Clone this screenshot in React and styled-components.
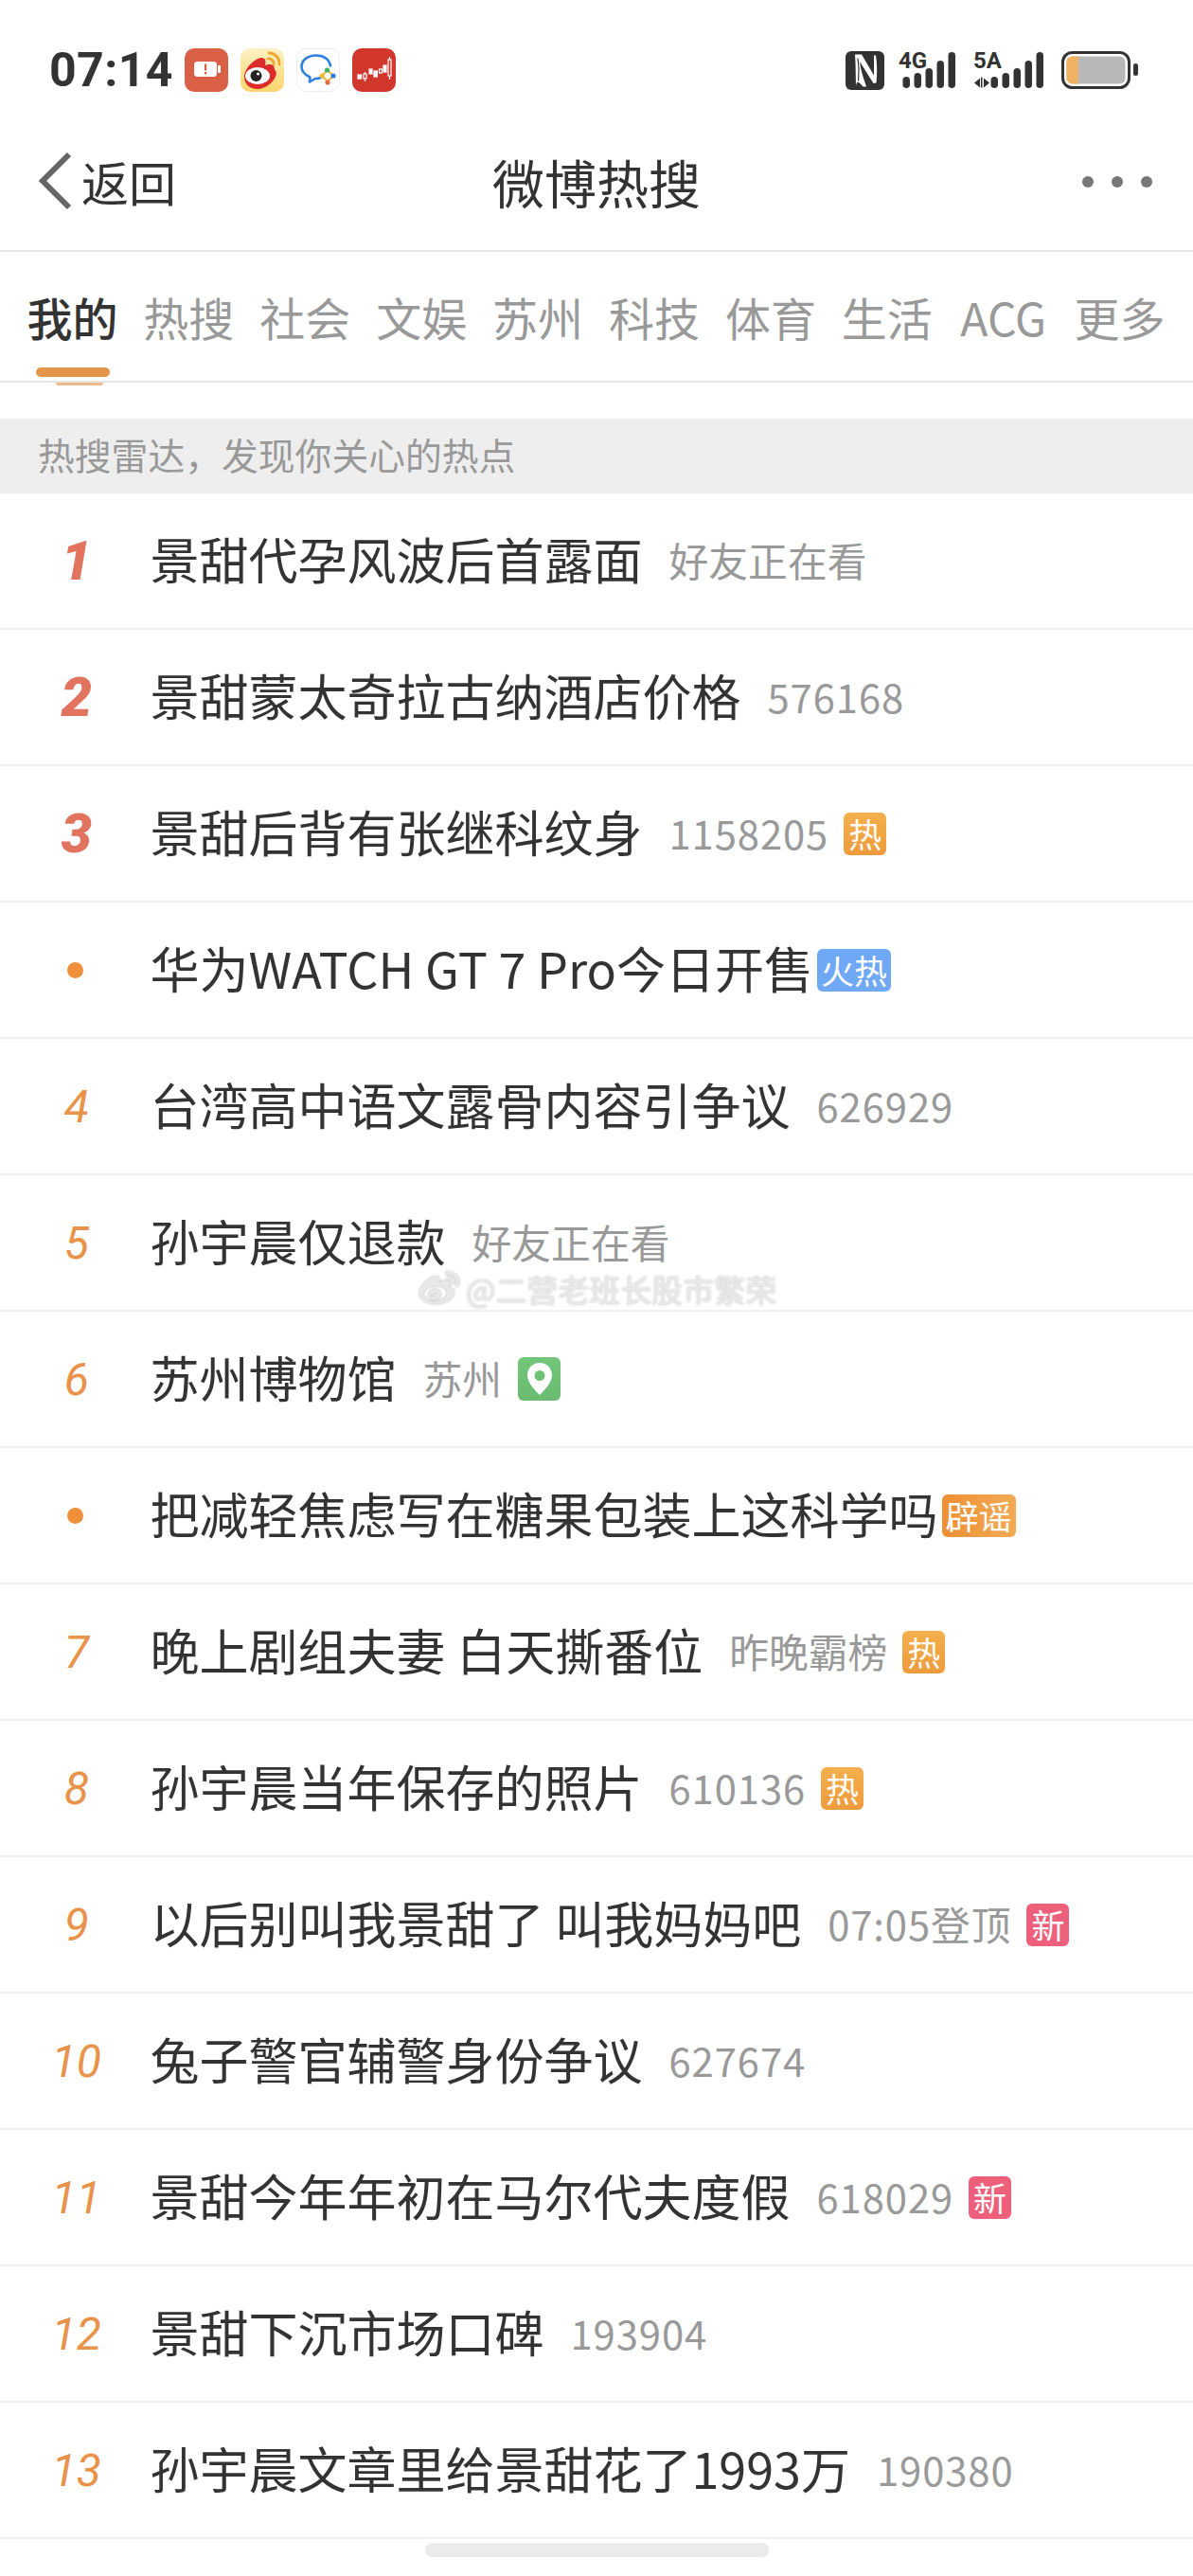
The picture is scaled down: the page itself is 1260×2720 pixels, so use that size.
import React from "react";
import styled, { createGlobalStyle } from "styled-components";
import { FaWeibo } from "react-icons/fa";

const Global = createGlobalStyle`
  html, body { margin: 0; padding: 0; background: #fff; }
  body { font-family: "Noto Sans CJK SC", "Noto Sans", sans-serif; }
`;

const Page = styled.div`
  position: relative;
  width: 1260px;
  height: 2720px;
  overflow: hidden;
  background: #fff;
  color: #333;
`;

const StatusBar = styled.div`
  height: 120px;
  box-sizing: border-box;
  padding: 51px 58px 0 52px;
  display: flex;
  align-items: flex-start;
`;

const Time = styled.div`
  font-family: Roboto, sans-serif;
  font-weight: 700;
  font-size: 50px;
  line-height: 46px;
  width: 143px;
  letter-spacing: 0.4px;
  color: #333;
`;

const AppIcons = styled.div`
  display: flex;
  gap: 13px;
`;

const AppIcon = styled.div`
  width: 46px;
  height: 46px;
  border-radius: 10px;
  background: ${(p) => p.$bg};
  border: ${(p) => (p.$line ? "1px solid #eee" : "none")};
  box-sizing: border-box;
  overflow: hidden;
  display: flex;
  align-items: center;
  justify-content: center;
`;

const StatusRight = styled.div`
  margin-left: auto;
  display: flex;
  align-items: center;
  height: 46px;
  gap: 15px;
`;

const SignalBox = styled.div`
  position: relative;
  width: ${(p) => p.$width}px;
  height: 40px;
`;

const SignalLabel = styled.span`
  position: absolute;
  left: 0;
  top: -3px;
  font-family: Roboto, sans-serif;
  font-weight: 700;
  font-size: 24px;
  line-height: 26px;
  color: #333;
`;

const Nav = styled.div`
  height: 146px;
  box-sizing: border-box;
  border-bottom: 2px solid #e6e6e6;
  padding: 0 43px 3px 40px;
  display: grid;
  grid-template-columns: 1fr auto 1fr;
  align-items: center;
`;

const Back = styled.div`
  display: flex;
  align-items: center;
  gap: 9px;
  font-size: 50px;
  line-height: 60px;
`;

const Title = styled.div`
  font-size: 55px;
  line-height: 66px;
  margin-left: 3px;
`;

const More = styled.div`
  justify-self: end;
  display: flex;
  gap: 19px;
  margin-top: 3px;
`;

const Dot = styled.span`
  width: 12px;
  height: 12px;
  border-radius: 50%;
  background: #777;
`;

const Tabs = styled.div`
  height: 138px;
  box-sizing: border-box;
  border-bottom: 2px solid #e6e6e6;
  padding: 0 16px 0 15px;
  display: flex;
`;

const Tab = styled.div`
  position: relative;
  flex: 1;
  display: flex;
  justify-content: center;
  padding-top: 33px;
  font-size: 48px;
  line-height: 70px;
  color: ${(p) => (p.$active ? "#333" : "#999")};
  font-weight: ${(p) => (p.$active ? 500 : 400)};
`;

const TabMark = styled.span`
  position: absolute;
  left: 23px;
  bottom: 4px;
  width: 78px;
  height: 10px;
  border-radius: 5px;
  background: #e3954a;
`;

const Peek = styled.div`
  height: 38px;
  padding-left: 59px;
`;

const PeekBar = styled.div`
  width: 50px;
  height: 3px;
  border-radius: 0 0 6px 6px;
  background: #eeb98a;
`;

const Banner = styled.div`
  height: 79px;
  background: #eeeeee;
  padding: 0 0 6px 40px;
  box-sizing: border-box;
  display: flex;
  align-items: center;
  font-size: 38.8px;
  color: #999;
`;

const Row = styled.div`
  height: 144px;
  box-sizing: border-box;
  border-bottom: 2px solid #f1f1f1;
  display: flex;
  align-items: center;
`;

const RankCell = styled.div`
  width: 158.5px;
  flex: none;
  padding-left: 3px;
  box-sizing: border-box;
  display: flex;
  justify-content: center;
  font-style: italic;
  font-family: Roboto, sans-serif;
  font-size: ${(p) => (p.$top ? 58 : 48)}px;
  font-weight: ${(p) => (p.$top ? 900 : 400)};
  color: ${(p) => (p.$top ? "#e2735f" : "#e8924a")};
`;

const HotDot = styled.span`
  width: 17px;
  height: 17px;
  border-radius: 50%;
  background: #ee8f3a;
  margin-right: 3px;
`;

const RowTitle = styled.div`
  font-size: 52px;
  line-height: 70px;
  margin-bottom: 5px;
  color: #333;
  white-space: nowrap;
`;

const Sub = styled.div`
  margin-left: 28px;
  font-size: 41.8px;
  line-height: 60px;
  margin-bottom: 3px;
  letter-spacing: ${(p) => (p.$num ? "0.9px" : "0")};
  color: #999;
  white-space: nowrap;
`;

const Badge = styled.div`
  height: 45px;
  box-sizing: border-box;
  padding: 0 4px;
  min-width: 45px;
  margin-left: ${(p) => (p.$tight ? 4 : 16)}px;
  border-radius: 6px;
  background: ${(p) => p.$bg};
  color: #fff;
  font-size: 35px;
  line-height: 43px;
  text-align: center;
  white-space: nowrap;
`;

const PinBadge = styled(Badge)`
  display: flex;
  align-items: center;
  justify-content: center;
  height: 46px;
  margin-left: 17px;
`;

const Watermark = styled.div`
  position: absolute;
  left: 443px;
  top: 1340px;
  display: flex;
  align-items: center;
  gap: 7px;
  font-size: 33px;
  line-height: 40px;
  color: #e8e8e8;
  text-shadow: 0 0 3px rgba(130, 130, 130, 0.45);
`;

const WatermarkLogo = styled(FaWeibo)`
  filter: drop-shadow(0 0 1.5px rgba(130, 130, 130, 0.6));
`;

const HomeBar = styled.div`
  position: absolute;
  left: 449px;
  top: 2685px;
  width: 363px;
  height: 15px;
  border-radius: 7px;
  background: #ebebeb;
`;

const tabs = ["我的", "热搜", "社会", "文娱", "苏州", "科技", "体育", "生活", "ACG", "更多"];

const colors = {
  hot: "linear-gradient(180deg, #f3b04c, #ee9a3c)",
  fire: "#6fa8f5",
  rumor: "linear-gradient(90deg, #ee8f33, #f2ab55)",
  fresh: "#ee5f7c",
  pin: "linear-gradient(180deg, #72c67a, #6abb6f)",
};

const rows = [
  { rank: 1, title: "景甜代孕风波后首露面", sub: "好友正在看" },
  { rank: 2, title: "景甜蒙太奇拉古纳酒店价格", sub: "576168" },
  { rank: 3, title: "景甜后背有张继科纹身", sub: "1158205", badge: "热", bg: colors.hot },
  { title: "华为WATCH GT 7 Pro今日开售", badge: "火热", bg: colors.fire, tight: true },
  { rank: 4, title: "台湾高中语文露骨内容引争议", sub: "626929" },
  { rank: 5, title: "孙宇晨仅退款", sub: "好友正在看" },
  { rank: 6, title: "苏州博物馆", sub: "苏州", pin: true },
  { title: "把减轻焦虑写在糖果包装上这科学吗", badge: "辟谣", bg: colors.rumor, tight: true },
  { rank: 7, title: "晚上剧组夫妻 白天撕番位", sub: "昨晚霸榜", badge: "热", bg: colors.hot },
  { rank: 8, title: "孙宇晨当年保存的照片", sub: "610136", badge: "热", bg: colors.hot },
  { rank: 9, title: "以后别叫我景甜了 叫我妈妈吧", sub: "07:05登顶", badge: "新", bg: colors.fresh },
  { rank: 10, title: "兔子警官辅警身份争议", sub: "627674" },
  { rank: 11, title: "景甜今年年初在马尔代夫度假", sub: "618029", badge: "新", bg: colors.fresh },
  { rank: 12, title: "景甜下沉市场口碑", sub: "193904" },
  { rank: 13, title: "孙宇晨文章里给景甜花了1993万", sub: "190380" },
];

function BatteryAlert() {
  return (
    <svg width="46" height="46" viewBox="0 0 46 46">
      <rect x="10" y="14" width="24" height="16" rx="3.5" fill="#fff" />
      <rect x="35" y="18" width="3" height="8" rx="1" fill="#fff" />
      <rect x="21" y="16.5" width="2.2" height="7" fill="#d95c42" />
      <rect x="21" y="25" width="2.2" height="2.4" fill="#d95c42" />
    </svg>
  );
}

function WeiboColor() {
  return (
    <svg width="46" height="46" viewBox="0 0 46 46">
      <path d="M30 5a11 11 0 0 1 11 12" fill="none" stroke="#efa52f" strokeWidth="2.8" strokeLinecap="round" />
      <path d="M29 11a5.5 5.5 0 0 1 6 6.5" fill="none" stroke="#efa52f" strokeWidth="2.8" strokeLinecap="round" />
      <path d="M4 30c0-8 10-19 18-20 5 0 5 4 4 8 5-2 10-1 10 4 1 2 3 4 1 8-3 7-12 13-19 13C9 43 4 37 4 30z" fill="#dc2b2b" />
      <ellipse cx="18" cy="29" rx="13" ry="9" fill="#fff" />
      <circle cx="16.5" cy="29" r="6" fill="#222" />
      <circle cx="18.6" cy="27" r="1.6" fill="#fff" />
    </svg>
  );
}

function ChatSpark() {
  return (
    <svg width="44" height="44" viewBox="0 0 44 44">
      <path d="M25 30c-2 .8-4 1.2-6 1l-6 3.5.4-5C8 27 4.5 23.5 4.5 18.5 4.5 11.5 11 6.5 20 6.500c8 0 14 4.500 15 11" fill="none" stroke="#2f80de" strokeWidth="2.6" strokeLinecap="round" strokeLinejoin="round" />
      <path d="M32 22l-6 6 6 6 6-6z" fill="none" stroke="#f0b93a" strokeWidth="2" />
      <circle cx="31.5" cy="22" r="2.6" fill="#3fb56b" />
      <circle cx="38" cy="28" r="2.6" fill="#2f80de" />
      <circle cx="32" cy="35" r="2.6" fill="#e8673c" />
      <circle cx="26" cy="28" r="2.6" fill="#f0b93a" />
    </svg>
  );
}

function Candles() {
  return (
    <svg width="46" height="46" viewBox="0 0 46 46" fill="none" stroke="#fff" strokeWidth="1.2">
      <rect x="6" y="28" width="3.6" height="4" fill="#fff" />
      <path d="M13.5 25v10" />
      <rect x="12" y="27" width="3" height="5" fill="#d2372e" />
      <rect x="18" y="22" width="3" height="5" fill="#fff" />
      <rect x="23" y="24" width="3.4" height="6" fill="#fff" />
      <rect x="28.5" y="22" width="3" height="4" />
      <rect x="33" y="18" width="3" height="7" fill="#fff" />
      <path d="M39.5 9v24" />
      <rect x="38" y="12" width="3" height="17" fill="#d2372e" />
    </svg>
  );
}

function NfcIcon() {
  return (
    <svg width="41" height="41" viewBox="0 0 41 41">
      <rect width="41" height="41" rx="6" fill="#333" />
      <path d="M10 3.5h7l13 22V4.5h2c1.500 9 1.500 20 .5 29l-3 .5L15 11c1 9 4 18 7 26.500h-3.500C14 33 12 30 11 37c-.3-12-.2-24-1-33.500z" fill="#fff" />
      <path d="M13 7.5c1.300 8 1.300 17 .5 24" fill="none" stroke="#333" strokeWidth="1.2" />
    </svg>
  );
}

function Signal({ label, arrows, width }) {
  const heights = [12, 16, 21, 29, 38];
  const x0 = width - 5 * 12;
  return (
    <SignalBox $width={width}>
      <SignalLabel>{label}</SignalLabel>
      <svg width={width} height="40" viewBox={`0 0 ${width} 40`}>
        {arrows && <path d="M1 33.5l6-5v10zM8 27.5h1.500v11H8zM11 28.5l6 5-6 5z" fill="#333" />}
        {heights.map((h, i) => (
          <rect key={i} x={x0 + i * 12 + 0.5} y={39 - h} width="7.5" height={h} rx="3.75" fill="#333" />
        ))}
      </svg>
    </SignalBox>
  );
}

function Battery() {
  return (
    <svg width="81" height="40" viewBox="0 0 81 40">
      <rect x="1.5" y="1.5" width="70" height="37" rx="10" fill="#fff" stroke="#333" strokeWidth="3" />
      <rect x="5.5" y="5.5" width="62" height="29" rx="6" fill="#b8b8b8" />
      <path d="M11.5 5.5h6.500v29h-6.500a6 6 0 0 1-6-6v-17a6 6 0 0 1 6-6z" fill="#f0b262" />
      <rect x="76" y="13" width="5" height="13" rx="2.5" fill="#333" />
    </svg>
  );
}

export default function App() {
  return (
    <Page>
      <Global />
      <StatusBar>
        <Time>07:14</Time>
        <AppIcons>
          <AppIcon $bg="#d95f47"><BatteryAlert /></AppIcon>
          <AppIcon $bg="linear-gradient(180deg, #fdf1c5, #fbd56b)"><WeiboColor /></AppIcon>
          <AppIcon $bg="#fff" $line><ChatSpark /></AppIcon>
          <AppIcon $bg="#d2372e"><Candles /></AppIcon>
        </AppIcons>
        <StatusRight>
          <NfcIcon />
          <Signal label="4G" width={64} />
          <Signal label="5A" width={78} arrows />
          <Battery />
        </StatusRight>
      </StatusBar>
      <Nav>
        <Back>
          <svg width="37" height="62" viewBox="0 0 37 62">
            <path d="M33 3L5 31l28 28" fill="none" stroke="#666" strokeWidth="6" />
          </svg>
          返回
        </Back>
        <Title>微博热搜</Title>
        <More><Dot /><Dot /><Dot /></More>
      </Nav>
      <Tabs>
        {tabs.map((t, i) => (
          <Tab key={t} $active={i === 0}>
            {t}
            {i === 0 && <TabMark />}
          </Tab>
        ))}
      </Tabs>
      <Peek><PeekBar /></Peek>
      <Banner>热搜雷达，发现你关心的热点</Banner>
      {rows.map((r) => (
        <Row key={r.title}>
          <RankCell $top={r.rank <= 3}>{r.rank ? r.rank : <HotDot />}</RankCell>
          <RowTitle>{r.title}</RowTitle>
          {r.sub && <Sub $num={/\d/.test(r.sub)}>{r.sub}</Sub>}
          {r.badge && <Badge $bg={r.bg} $tight={r.tight}>{r.badge}</Badge>}
          {r.pin && (
            <PinBadge $bg={colors.pin}>
              <svg width="28" height="36" viewBox="0 0 28 36">
                <path fillRule="evenodd" d="M14 1C6.5 1 1 6.8 1 14c0 8 8 16 13 21 5-5 13-13 13-21C27 6.8 21.5 1 14 1zm0 8a5.5 5.5 0 1 1 0 11 5.5 5.5 0 0 1 0-11z" fill="#fff" />
              </svg>
            </PinBadge>
          )}
        </Row>
      ))}
      <Watermark>
        <WatermarkLogo size={42} />
        @二营老班长股市繁荣
      </Watermark>
      <HomeBar />
    </Page>
  );
}
